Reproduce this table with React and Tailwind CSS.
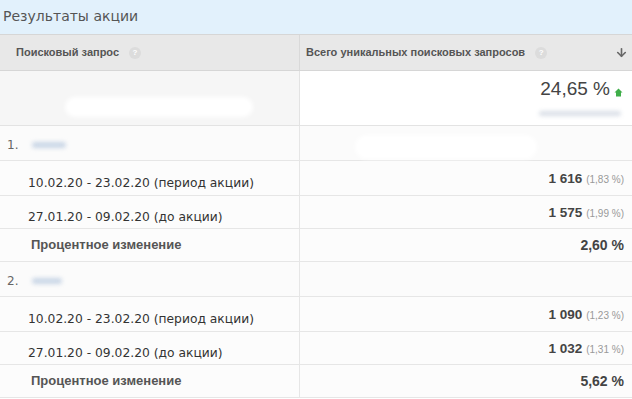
import { ArrowDown } from "lucide-react";

const Help = () => (
  <span className="inline-flex w-[12px] h-[12px] rounded-full bg-[#dcdcdc] ml-[10px] items-center justify-center text-[8px] text-white">?</span>
);

const Blur = ({ w, className = "" }) => (
  <span className={`inline-block h-[6px] rounded-full bg-[#c9d6e6] blur-[2px] ${className}`} style={{ width: w }} />
);

const groups = [
  {
    n: "1.",
    blur: 34,
    rows: [
      ["10.02.20 - 23.02.20 (период акции)", "1 616", "(1,83 %)"],
      ["27.01.20 - 09.02.20 (до акции)", "1 575", "(1,99 %)"],
    ],
    change: "2,60 %",
    white: true,
  },
  {
    n: "2.",
    blur: 30,
    rows: [
      ["10.02.20 - 23.02.20 (период акции)", "1 090", "(1,23 %)"],
      ["27.01.20 - 09.02.20 (до акции)", "1 032", "(1,31 %)"],
    ],
    change: "5,62 %",
  },
];

export default function App() {
  return (
    <div className="w-[632px] h-[399px] overflow-hidden bg-white text-[#333]" style={{ fontFamily: "'DejaVu Sans', sans-serif" }}>
      {/* title */}
      <div className="h-[34px] bg-[#e2f1fc] flex items-center pl-[3px] pb-[2px] text-[14px] text-[#555]">
        Результаты акции
      </div>

      {/* header */}
      <div className="flex h-[37px] bg-[#e8e8e8] border-t border-b border-[#d6d6d6] font-['Liberation_Sans',sans-serif] font-bold text-[11px] text-[#555]">
        <div className="w-[300px] border-r border-[#d9d9d9] flex items-center pl-[16px]">
          Поисковый запрос <Help />
        </div>
        <div className="flex-1 flex items-center pl-[6px] pr-[4px]">
          Всего уникальных поисковых запросов <Help />
          <ArrowDown className="ml-auto w-[13px] h-[13px] text-[#666]" strokeWidth={3} />
        </div>
      </div>

      {/* summary */}
      <div className="flex h-[55px] border-b border-[#e3e3e3]">
        <div className="w-[300px] bg-[#f6f6f6] border-r border-[#e3e3e3] flex items-end pb-[8px] pl-[65px]">
          <span className="inline-block h-[20px] w-[188px] rounded-full bg-white blur-[2px]" />
        </div>
        <div className="flex-1 flex flex-col items-end pr-[9px] pt-[6px] font-['Liberation_Sans',sans-serif]">
          <div className="flex items-center text-[19px] text-[#444] leading-[24px]">
            24,65 %
            <svg width="9" height="9" viewBox="0 0 9 9" className="ml-[4px] mt-[6px]">
              <path d="M4.5 0.5 L8.5 4.5 L7 4.5 L7 8.5 L2 8.5 L2 4.5 L0.5 4.5 Z" fill="#3fae49" />
            </svg>
          </div>
          <span className="mt-[10px] mr-[2px] inline-block h-[5px] w-[82px] rounded bg-[#dadfe7] blur-[2px]" />
        </div>
      </div>

      {groups.map((g, gi) => (
        <div key={gi}>
          <div className="flex h-[35px] border-b border-[#e6e6e6] bg-[#fbfbfb]">
            <div className="w-[300px] border-r border-[#e6e6e6] flex items-center pl-[7px] pt-[4px] text-[12px] text-[#666]">
              {g.n}
              <Blur w={g.blur} className="ml-[14px]" />
            </div>
            <div className="flex-1 flex items-center pl-[55px]">
              {g.white && <span className="inline-block h-[24px] w-[182px] rounded-full bg-white blur-[2px] mt-[8px]" />}
            </div>
          </div>
          {g.rows.map((r, ri) => (
            <div key={ri} className={`flex ${ri === 0 ? "h-[35px]" : "h-[33px]"} border-b border-[#e6e6e6] bg-[#fcfcfc]`}>
              <div className="w-[300px] border-r border-[#e6e6e6] flex items-center pl-[28px] pt-[10px] text-[12.3px] text-[#333]">
                {r[0]}
              </div>
              <div className="flex-1 flex items-center justify-end pr-[8px] pt-[2px] font-['Liberation_Sans',sans-serif]">
                <span className="font-bold text-[13.5px] text-[#444]">{r[1]}</span>
                <span className="ml-[4px] text-[10px] text-[#999]">{r[2]}</span>
              </div>
            </div>
          ))}
          <div className="flex h-[33px] border-b border-[#e6e6e6] bg-[#fcfcfc]">
            <div className="w-[300px] border-r border-[#e6e6e6] flex items-center pl-[31px] font-['Liberation_Sans',sans-serif] font-bold text-[13px] text-[#555]">
              Процентное изменение
            </div>
            <div className="flex-1 flex items-center justify-end pr-[8px] font-['Liberation_Sans',sans-serif] font-bold text-[14px] text-[#444]">
              {g.change}
            </div>
          </div>
        </div>
      ))}
    </div>
  );
}
